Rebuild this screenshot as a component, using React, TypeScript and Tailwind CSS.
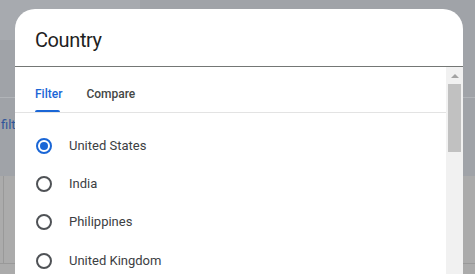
import React from "react";

const countries = ["United States", "India", "Philippines", "United Kingdom"];

function Radio({ checked }: { checked: boolean }) {
  return checked ? (
    <span className="flex h-4 w-4 items-center justify-center rounded-full border-2 border-[#1a66d6]">
      <span className="h-2 w-2 rounded-full bg-[#1a66d6]" />
    </span>
  ) : (
    <span className="h-4 w-4 rounded-full border-2 border-[#4f5256]" />
  );
}

export default function App() {
  return (
    <div
      className="relative h-[274px] w-[475px] overflow-hidden bg-[#ababab]"
      style={{ fontFamily: "Roboto, 'Noto Sans', sans-serif" }}
    >
      {/* page under the scrim */}
      <div className="flex h-full flex-col">
        <div className="relative h-[176px] bg-[#a0a3a8]">
          <div className="absolute left-0 top-0 h-[40px] w-[140px] rounded-br-[16px] bg-[#a7aaaf]" />
          <div className="absolute left-0 right-0 top-[97px] h-px bg-[#b1b4b8]" />
          <div className="absolute left-[1px] top-[117px] text-[13px] leading-[16px] text-[#31569a]">filters</div>
        </div>
        <div className="relative flex-1">
          <div className="absolute left-[3px] top-0 h-[87px] w-px bg-[#999999]" />
          <div className="absolute left-0 right-0 top-[87px] h-px bg-[#999999]" />
        </div>
      </div>

      {/* dialog */}
      <div className="absolute left-[15px] top-[9px] flex h-[290px] w-[448px] flex-col rounded-t-[20px] bg-white">
        <div className="h-[58px] border-b border-[#747775] pl-5 pt-[17px]">
          <div className="text-[20px] leading-[28px] tracking-[-0.4px] text-[#1f1f1f]">Country</div>
        </div>
        <div className="flex flex-1">
          <div className="flex-1">
            <div className="flex h-[46px] gap-[24px] border-b border-[#e3e3e3] pl-5">
              <div className="flex flex-col">
                <div className="mt-[19px] text-[12px] font-medium leading-[16px] text-[#1a66d6]">Filter</div>
                <div className="mt-auto h-[2px] w-[25px] rounded-t-[2px] bg-[#1a66d6]" />
              </div>
              <div className="mt-[19px] text-[12px] font-medium leading-[16px] text-[#444746]">Compare</div>
            </div>
            <div className="pt-[14px]">
              {countries.map((c, i) => (
                <div key={c} className="flex h-[38.2px] items-center pl-[21px]">
                  <Radio checked={i === 0} />
                  <span className="ml-[17px] text-[13px] leading-[16px] text-[#3c4043]">{c}</span>
                </div>
              ))}
            </div>
          </div>
          {/* scrollbar */}
          <div className="flex w-[17px] flex-col items-center bg-[#f1f1f1]">
            <svg width="8" height="5" viewBox="0 0 8 5" className="mt-[7px]">
              <polygon points="0,4 4,0 8,4" fill="#a3a3a3" />
            </svg>
            <div className="mt-[5px] h-[68px] w-[13px] bg-[#c1c1c1]" />
          </div>
        </div>
      </div>
    </div>
  );
}
